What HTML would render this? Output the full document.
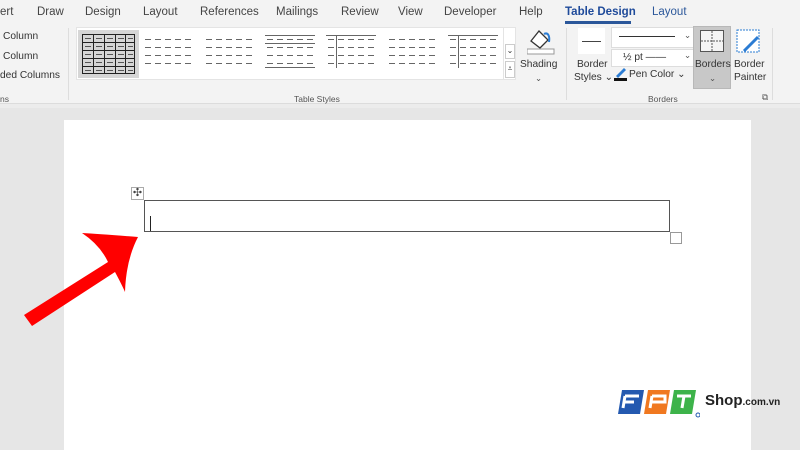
<!DOCTYPE html><html><head><meta charset="utf-8"><style>
*{margin:0;padding:0;box-sizing:border-box}
body{width:800px;height:450px;overflow:hidden;background:#e6e6e6;font-family:"Liberation Sans",sans-serif;position:relative;color:#333}
.a{position:absolute;white-space:nowrap}
.tab{font-size:11.5px;top:6px;color:#444}
.s{font-size:10.2px;color:#333}
.g{font-size:8.5px;color:#555}
</style></head><body>
<div class="a" style="left:0;top:0;width:800px;height:104px;background:#f3f3f3;border-bottom:1px solid #dcdcdc"></div>
<div class="a" style="left:0;top:104px;width:800px;height:4px;background:#ececec"></div>
<div class="a tab" style="left:0">ert</div>
<div class="a tab" style="left:37px">Draw</div>
<div class="a tab" style="left:85px">Design</div>
<div class="a tab" style="left:143px">Layout</div>
<div class="a tab" style="left:200px">References</div>
<div class="a tab" style="left:276px">Mailings</div>
<div class="a tab" style="left:341px">Review</div>
<div class="a tab" style="left:398px">View</div>
<div class="a tab" style="left:444px">Developer</div>
<div class="a tab" style="left:519px">Help</div>
<div class="a tab" style="left:565px;color:#1e4a9a;font-weight:bold">Table Design</div>
<div class="a" style="left:565px;top:21px;width:66px;height:3px;background:#2b579a"></div>
<div class="a tab" style="left:652px;color:#2b579a">Layout</div>
<div class="a s" style="left:3px;top:31px">Column</div>
<div class="a s" style="left:3px;top:51px">Column</div>
<div class="a s" style="left:0;top:70px">ded Columns</div>
<div class="a g" style="left:0;top:94px">ns</div>
<div class="a" style="left:68px;top:28px;width:1px;height:72px;background:#ddd"></div>
<div class="a" style="left:76px;top:27px;width:440px;height:53px;background:#fff;border:1px solid #e4e4e4"></div>
<div class="a" style="left:78px;top:30px;width:61px;height:48px;background:#d6d6d6"></div>
<svg class="a" style="left:82px;top:34px" width="53" height="40"><g stroke="#222" stroke-width="1" fill="none"><rect x=".5" y=".5" width="52" height="39"/><path d="M0 8.5H53M0 16.5H53M0 24.5H53M0 32.5H53M11.5 0V40M22.5 0V40M33.5 0V40M43.5 0V40"/></g><g stroke="#555"><path d="M3 4.5h6M14 4.5h6M25 4.5h6M36 4.5h6M46 4.5h5M3 12.5h6M14 12.5h6M25 12.5h6M36 12.5h6M46 12.5h5M3 20.5h6M14 20.5h6M25 20.5h6M36 20.5h6M46 20.5h5M3 28.5h6M14 28.5h6M25 28.5h6M36 28.5h6M46 28.5h5M3 36.5h6M14 36.5h6M25 36.5h6M36 36.5h6M46 36.5h5"/></g></svg>
<svg class="a" style="left:143px;top:34px" width="360" height="40"><g stroke="#666" stroke-width="1">
<path d="M2 5.5h6M12 5.5h6M22 5.5h6M32 5.5h6M42 5.5h6M2 13.5h6M12 13.5h6M22 13.5h6M32 13.5h6M42 13.5h6M2 21.5h6M12 21.5h6M22 21.5h6M32 21.5h6M42 21.5h6M2 29.5h6M12 29.5h6M22 29.5h6M32 29.5h6M42 29.5h6"/>
<path transform="translate(61 0)" d="M2 5.5h6M12 5.5h6M22 5.5h6M32 5.5h6M42 5.5h6M2 13.5h6M12 13.5h6M22 13.5h6M32 13.5h6M42 13.5h6M2 21.5h6M12 21.5h6M22 21.5h6M32 21.5h6M42 21.5h6M2 29.5h6M12 29.5h6M22 29.5h6M32 29.5h6M42 29.5h6"/>
<path transform="translate(122 0)" d="M0 1.5h50M2 5.5h6M12 5.5h6M22 5.5h6M32 5.5h6M42 5.5h6M0 9.5h50M2 13.5h6M12 13.5h6M22 13.5h6M32 13.5h6M42 13.5h6M2 21.5h6M12 21.5h6M22 21.5h6M32 21.5h6M42 21.5h6M2 29.5h6M12 29.5h6M22 29.5h6M32 29.5h6M42 29.5h6M0 33.5h50"/>
<path transform="translate(183 0)" d="M0 1.5h50M2 5.5h6M12 5.5h6M22 5.5h6M32 5.5h6M42 5.5h6M2 13.5h6M12 13.5h6M22 13.5h6M32 13.5h6M42 13.5h6M2 21.5h6M12 21.5h6M22 21.5h6M32 21.5h6M42 21.5h6M2 29.5h6M12 29.5h6M22 29.5h6M32 29.5h6M42 29.5h6M10.5 2v32"/>
<path transform="translate(244 0)" d="M2 5.5h6M12 5.5h6M22 5.5h6M32 5.5h6M42 5.5h6M2 13.5h6M12 13.5h6M22 13.5h6M32 13.5h6M42 13.5h6M2 21.5h6M12 21.5h6M22 21.5h6M32 21.5h6M42 21.5h6M2 29.5h6M12 29.5h6M22 29.5h6M32 29.5h6M42 29.5h6"/>
<path transform="translate(305 0)" d="M0 1.5h50M2 5.5h6M12 5.5h6M22 5.5h6M32 5.5h6M42 5.5h6M2 13.5h6M12 13.5h6M22 13.5h6M32 13.5h6M42 13.5h6M2 21.5h6M12 21.5h6M22 21.5h6M32 21.5h6M42 21.5h6M2 29.5h6M12 29.5h6M22 29.5h6M32 29.5h6M42 29.5h6M10.5 2v32"/>
</g></svg>
<div class="a" style="left:503px;top:27px;width:13px;height:53px;border-left:1px solid #e4e4e4"></div>
<div class="a" style="left:505px;top:44px;width:10px;height:15px;border:1px solid #ccc;font-size:8px;text-align:center;line-height:12px">⌄</div>
<div class="a" style="left:505px;top:61px;width:10px;height:17px;border:1px solid #ccc;font-size:8px;text-align:center;line-height:14px">⩡</div>
<div class="a g" style="left:294px;top:94px">Table Styles</div>
<svg class="a" style="left:527px;top:27px" width="28" height="28"><path d="M4 14l8-10 9 9-8 8z" fill="#fff" stroke="#333" stroke-width="1.3"/><path d="M17 7c4-2 6 2 5 8" fill="none" stroke="#2b7cd3" stroke-width="2"/><rect x="0" y="22" width="27" height="5" fill="#fff" stroke="#999"/></svg>
<div class="a s" style="left:520px;top:59px">Shading</div>
<div class="a g" style="left:535px;top:73px">⌄</div>
<div class="a" style="left:566px;top:28px;width:1px;height:72px;background:#ddd"></div>
<div class="a" style="left:578px;top:28px;width:27px;height:26px;background:#fff"></div>
<div class="a" style="left:582px;top:41px;width:19px;height:1px;background:#444"></div>
<div class="a s" style="left:577px;top:59px">Border</div>
<div class="a s" style="left:574px;top:72px">Styles ⌄</div>
<div class="a" style="left:611px;top:27px;width:83px;height:21px;background:#fff;border:1px solid #ddd"></div>
<div class="a" style="left:619px;top:36px;width:56px;height:1px;background:#333"></div>
<div class="a" style="left:611px;top:49px;width:83px;height:18px;background:#fff;border:1px solid #ddd"></div>
<div class="a s" style="left:623px;top:52px">½ pt ——</div>
<div class="a g" style="left:684px;top:30px">⌄</div><div class="a g" style="left:684px;top:50px">⌄</div>
<div class="a" style="left:614px;top:78px;width:13px;height:3px;background:#111"></div>
<svg class="a" style="left:614px;top:67px" width="14" height="11"><path d="M2 9l8-8 2 2-8 8z" fill="#2b7cd3"/></svg>
<div class="a s" style="left:629px;top:69px">Pen Color ⌄</div>
<div class="a" style="left:693px;top:26px;width:38px;height:63px;background:#c8c8c8;border:1px solid #b8b8b8"></div>
<svg class="a" style="left:700px;top:30px" width="24" height="22"><rect x=".5" y=".5" width="23" height="21" fill="#f4f4f4" stroke="#555"/><path d="M12 1v20M1 11h22" stroke="#555" stroke-dasharray="2 1"/></svg>
<div class="a s" style="left:695px;top:59px">Borders</div>
<div class="a g" style="left:709px;top:73px">⌄</div>
<svg class="a" style="left:736px;top:29px" width="26" height="26"><rect x="1" y="1" width="22" height="22" fill="#fff" stroke="#2b7cd3" stroke-dasharray="2 1"/><path d="M8 22l14-14" stroke="#2b7cd3" stroke-width="3"/></svg>
<div class="a s" style="left:734px;top:59px">Border</div>
<div class="a s" style="left:734px;top:72px">Painter</div>
<div class="a g" style="left:648px;top:94px">Borders</div>
<div class="a g" style="left:762px;top:92px">⧉</div>
<div class="a" style="left:772px;top:28px;width:1px;height:72px;background:#ddd"></div>

<div class="a" style="left:64px;top:120px;width:687px;height:330px;background:#fff"></div>
<div class="a" style="left:144px;top:200px;width:526px;height:32px;border:1px solid #555"></div>
<div class="a" style="left:150px;top:216px;width:1px;height:15px;background:#222"></div>
<div class="a" style="left:131px;top:187px;width:13px;height:13px;border:1px solid #aaa;background:#fff;font-size:11px;line-height:10px;text-align:center;color:#444">✣</div>
<div class="a" style="left:670px;top:232px;width:12px;height:12px;border:1px solid #999;background:#fff"></div>
<svg class="a" style="left:0;top:0" width="800" height="450"><path d="M138 237 Q100 234 82 233 Q100 245 108 262 L24 315 L32 326 L115 272 Q122 285 125 292 Q126 260 138 237Z" fill="#f00"/></svg>

<svg class="a" style="left:616px;top:382px" width="84" height="40"><path d="M6 8h22l-4 24H2z" fill="#2459b0"/><path d="M32 8h22l-4 24H28z" fill="#f07820"/><path d="M58 8h22l-4 24H54z" fill="#3db34a"/>
<path d="M9 14h14M9 14l-2 12M8 20h10M36 14h13v6H36M36 14l-2 12M61 14h14M68 14l-2 12" stroke="#fff" stroke-width="3" fill="none"/><circle cx="82" cy="33" r="2" fill="none" stroke="#2459b0"/></svg>
<div class="a" style="left:705px;top:392px;font-weight:bold;font-size:15px;color:#222">Shop<span style="font-size:10px">.com.vn</span></div>
</body></html>
